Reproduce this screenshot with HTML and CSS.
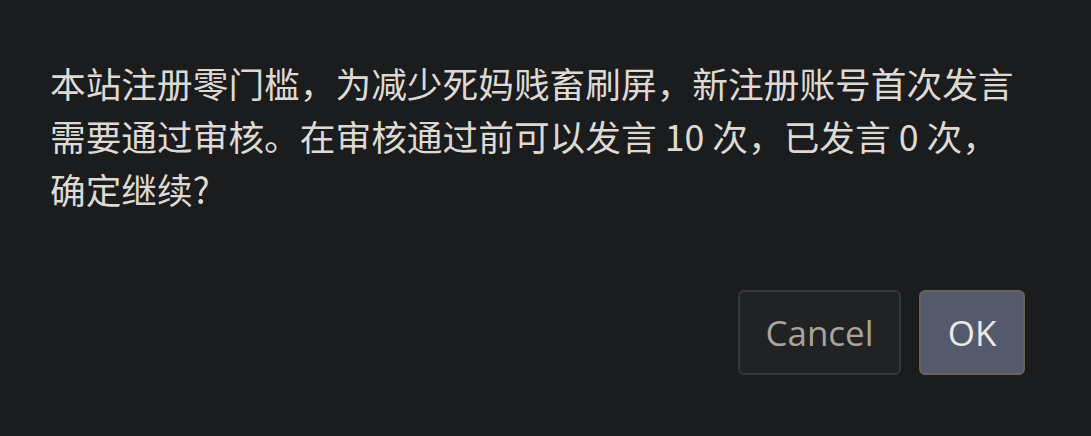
FILE: index.html
```html
<!DOCTYPE html>
<html lang="zh-CN">
<head>
    <meta charset="UTF-8">
    <title>确认</title>
    <link rel="stylesheet" href="styles.css">
</head>
<body>
<div class="dialog">
    <p class="dialog-message">本站注册零门槛，为减少死妈贱畜刷屏，新注册账号首次发言需要通过审核。在审核通过前可以发言 10 次，已发言 0 次，确定继续?</p>
    <div class="dialog-buttons">
        <button class="btn btn-cancel">Cancel</button>
        <button class="btn btn-ok">OK</button>
    </div>
</div>
</body>
</html>
```

FILE: styles.css
```css
html, body {
    margin: 0;
    background-color: #1b1c1e;
}

body {
    font-family: "Noto Sans CJK SC", "Noto Sans", sans-serif;
    color: #dedad3;
}

.dialog {
    padding: 56px 66px 0 50px;
}

.dialog-message {
    margin: 0;
    font-size: 35.7px;
    line-height: 53px;
}

.dialog-buttons {
    display: flex;
    justify-content: flex-end;
    gap: 18px;
    margin-top: 75px;
}

.btn {
    font-family: "Open Sans", "Noto Sans", sans-serif;
    font-size: 35px;
    height: 85px;
    border-radius: 6px;
    border: 2px solid;
    cursor: pointer;
}

.btn-cancel {
    width: 163px;
    background-color: #212224;
    border-color: #363739;
    color: #aaa49b;
}

.btn-ok {
    width: 106px;
    background-color: #545a6b;
    border-color: #6a6254;
    color: #ebe9e4;
}
```
